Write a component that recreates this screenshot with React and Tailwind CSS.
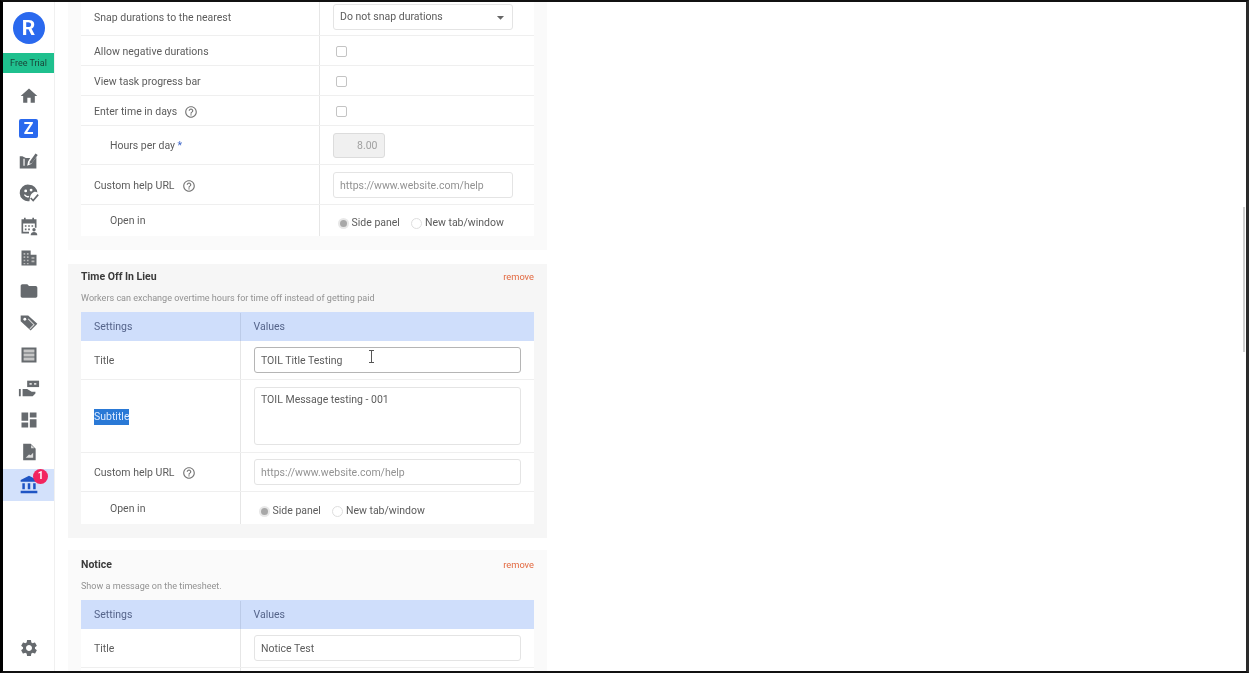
import React from "react";
import { MdHome, MdFolder, MdDashboard, MdAccountBalance, MdSettings, MdHelpOutline, MdArrowDropDown } from "react-icons/md";

const C = "#666a6e";
const Svg = ({ children, size = 20 }) => (
  <svg width={size} height={size} viewBox="0 0 24 24" fill={C}>{children}</svg>
);
const IconBox = ({ children, active }) => (
  <div className={"relative flex h-[32.4px] w-full items-center justify-center " + (active ? "bg-[#d3e1fb]" : "")}>{children}</div>
);

const Edit = () => (<Svg size={21}><path d="M2 7h3l4 2h5l-2.500 4-1 5 4.500-2 6-8v13H2z" /><path d="M6 10h1.800v8H6z" fill="#fff" opacity="0.75" /><path d="M13.500 13l6.500-9 2.500 1.800-6.500 9-3 1.200z" /></Svg>);
const FaceCheck = () => (<Svg><path d="M12 2a10 10 0 0 1 10 9.500c-1-.8-2.500-1.200-4-.7-2 .6-4 3-4.500 5l-1 6A10 10 0 1 1 12 2z" /><circle cx="8" cy="9.500" r="1.700" fill="#fff" /><circle cx="14.500" cy="8.500" r="1.700" fill="#fff" /><path d="M6.500 14c1.500 2.200 4 2.800 5.500 2" stroke="#fff" strokeWidth="1.500" fill="none" /><path d="M14 18l3 3 6-7" stroke={C} strokeWidth="2" fill="none" /></Svg>);
const Cal = () => (<Svg><path d="M3 4h3V2h2v2h8V2h2v2h3v10h-2V9H5v10h7v2H3z" /><path d="M7 11h2v2H7zM11 11h2v2h-2zM15 11h2v2h-2zM7 15h2v2H7zM11 15h2v2h-2z" /><circle cx="18" cy="16.500" r="2" /><path d="M14 23c0-5 8-5 8 0z" /></Svg>);
const Building = () => (<Svg><path d="M3 3h11v5h7v13H3z" /><path d="M5.500 6h2v2h-2zM9.500 6h2v2h-2zM5.500 10h2v2h-2zM9.500 10h2v2h-2zM15 11h3.500v2H15zM5.500 14h2v2h-2zM9.500 14h2v2h-2zM15 15h3.500v2H15zM5.500 18h2v1.500h-2zM9.500 18h2v1.500h-2z" fill="#b9b9b9" /></Svg>);
const Tags = () => (<Svg><path d="M2 3h9l11 10-8 8L2 10z" /><circle cx="7" cy="7.500" r="1.700" fill="#fff" /><path d="M11 7l7 7-5 5" stroke="#d5d5d5" strokeWidth="1.300" fill="none" /></Svg>);
const Rows = () => (<Svg><path d="M3 3h18v18H3z" /><path d="M5.500 5.500h13v3.600h-13zM5.500 10.200h13v3.600h-13zM5.500 14.900h13v3.600h-13z" fill="#c6c6c6" /></Svg>);
const Hand = () => (<Svg size={22}><path d="M10 4h13v7H10z" /><path d="M12.500 6.500h2.500v2h-2.500zM17.500 6.500h2.500v2h-2.500z" fill="#ddd" /><path d="M1 13h2v8H1zM5 13h5l5 3h4v2l-3 3H5z" /></Svg>);
const FileChart = () => (<Svg><path d="M5 2h9l6 6v14H5z" /><path d="M14.500 3.500v4h4z" fill="#ddd" /><path d="M8 19l4-4 2 1 3-3v6z" fill="#ddd" /></Svg>);

const Sidebar = () => (
  <aside className="flex h-full w-[52px] shrink-0 flex-col items-center border-r border-[#f0f0f0] bg-white blur-[0.4px]">
    <div className="mt-[10px] flex h-[32px] w-[32px] items-center justify-center rounded-full bg-[#2a69ee] text-[21px] font-bold leading-none text-white">R</div>
    <div className="mt-[9px] flex h-[20px] w-full items-center justify-center bg-[#1fc08e] pt-[1px] text-[9px] text-[#1a4438]">Free Trial</div>
    <div className="mt-[7px] flex w-full flex-col">
      <IconBox><MdHome size={20} color={C} /></IconBox>
      <IconBox><div className="flex h-[19px] w-[19px] items-center justify-center rounded-[2px] bg-[#2a69ee] text-[16px] font-bold leading-none text-white">Z</div></IconBox>
      <IconBox><Edit /></IconBox>
      <IconBox><FaceCheck /></IconBox>
      <IconBox><Cal /></IconBox>
      <IconBox><Building /></IconBox>
      <IconBox><MdFolder size={20} color={C} /></IconBox>
      <IconBox><Tags /></IconBox>
      <IconBox><Rows /></IconBox>
      <IconBox><Hand /></IconBox>
      <IconBox><MdDashboard size={20} color={C} /></IconBox>
      <IconBox><FileChart /></IconBox>
      <IconBox active>
        <MdAccountBalance size={20} color="#1f55c4" />
        <span className="absolute left-[30px] top-0 flex h-[15px] w-[15px] items-center justify-center rounded-full bg-[#f2255f] text-[10px] font-bold leading-none text-white">1</span>
      </IconBox>
    </div>
    <div className="mt-auto mb-[13px]"><MdSettings size={20} color={C} /></div>
  </aside>
);

const Help = () => <MdHelpOutline size={14} color="#777" className="ml-[7px]" />;

const Row = ({ h, label, indent, w = "w-[239px]", children, last, labelClass = "", labelPad = "pt-[2px]" }) => (
  <div className={"flex " + (last ? "" : "border-b border-[#efefef]")} style={{ height: h }}>
    <div className={"flex shrink-0 items-center border-r border-[#e6e6e6] text-[10.500px] text-[#5c5c5c] " + labelPad + " " + w + " " + (indent ? "pl-[29px]" : "pl-[13px]")}>
      <span className={labelClass}>{label}</span>
    </div>
    <div className="flex min-w-0 flex-1 items-center pl-[12.500px]">{children}</div>
  </div>
);

const Input = ({ w, text, placeholder, focus, h = "h-[26px]" }) => (
  <div className={"flex items-center rounded-[3px] bg-white pl-[6.500px] pt-[2px] text-[10.500px] " + w + " " + h + " " + (focus ? "border border-[#b5b5b5]" : "border border-[#e4e4e4]") + " " + (placeholder ? "text-[#929292]" : "text-[#5c5c5c]")}>
    {text}
  </div>
);

const Check = () => <div className="h-[11px] w-[11px] rounded-[2px] border border-[#c4c4c4] bg-white" />;

const Radios = ({ pad = "pt-[6px]" }) => (
  <div className={"flex items-center text-[10.500px] text-[#5c5c5c] " + pad}>
    <span className="ml-[5px] flex h-[11px] w-[11px] items-center justify-center rounded-full bg-[#e8e8e8]"><span className="h-[7px] w-[7px] rounded-full bg-[#a8a8a8]" /></span>
    <span className="ml-[3px]">Side panel</span>
    <span className="ml-[11px] h-[11px] w-[11px] rounded-full border border-[#dedede] bg-white" />
    <span className="ml-[3px]">New tab/window</span>
  </div>
);

const Head = ({ title, sub }) => (
  <>
    <div className="flex h-[26px] items-center justify-between">
      <span className="text-[10.500px] font-bold text-[#3a3a3a]">{title}</span>
      <span className="text-[9.300px] text-[#e2683f]">remove</span>
    </div>
    <div className="mb-[5px] flex h-[17px] items-center pt-[1px] text-[9.050px] text-[#929292]">{sub}</div>
  </>
);

const THead = () => (
  <div className="flex h-[29px] bg-[#cfdefb] pt-[1px] text-[10.500px] text-[#55648a]">
    <div className="flex w-[160px] shrink-0 items-center border-r border-[#bccbe8] pl-[13px]">Settings</div>
    <div className="flex flex-1 items-center pl-[12.500px]">Values</div>
  </div>
);

const Cursor = () => (
  <svg width="7" height="13" viewBox="0 0 7 13" className="absolute left-[107px] top-[-3px]" fill="none" stroke="#555" strokeWidth="1">
    <path d="M1 .5h5M3.500 .5v12M1 12.500h5" />
  </svg>
);

export default function App() {
  return (
    <div className="h-[678px] w-[1252px] overflow-hidden bg-white" style={{ fontFamily: "Roboto, Inter, 'Liberation Sans', sans-serif" }}>
      <div className="flex h-[673px] w-[1249px] overflow-hidden border-y-2 border-r-[3px] border-l-[3px] border-y-[#111] border-r-[#2a2a2a] border-l-black">
        <Sidebar />
        <main className="relative flex-1 overflow-hidden">
          <div className="ml-[13px] mt-[-4px] w-[479px] blur-[0.4px]">
            <div className="h-[252px] bg-[#fafafa] px-[13px]">
              <div className="bg-white">
                <Row h="38px" label="Snap durations to the nearest">
                  <div className="flex h-[26px] w-[180px] items-center justify-between rounded-[3px] border border-[#e4e4e4] bg-white pl-[6.500px] pr-[3px] pt-[1px] text-[10.500px] text-[#5c5c5c]">
                    Do not snap durations
                    <MdArrowDropDown size={17} color="#666" />
                  </div>
                </Row>
                <Row h="30px" label="Allow negative durations"><span className="ml-[3px] mt-[1px]"><Check /></span></Row>
                <Row h="30px" label="View task progress bar"><span className="ml-[3px] mt-[1px]"><Check /></span></Row>
                <Row h="30px" label={<span className="flex items-center">Enter time in days<Help /></span>}><span className="ml-[3px] mt-[1px]"><Check /></span></Row>
                <Row h="39px" indent label={<>Hours per day <span className="text-[#3a63c8]">*</span></>}>
                  <div className="flex h-[25px] w-[52px] items-center justify-end rounded-[3px] border border-[#dcdcdc] bg-[#f0f0f0] pr-[6px] pt-[1px] text-[10.500px] text-[#a0a0a0]">8.00</div>
                </Row>
                <Row h="40px" label={<span className="flex items-center">Custom help URL<Help /></span>}>
                  <Input w="w-[180px]" text="https://www.website.com/help" placeholder />
                </Row>
                <Row h="31px" indent last label="Open in" labelPad="pt-0"><Radios pad="pt-[5px]" /></Row>
              </div>
            </div>

            <div className="mt-[14px] h-[274px] bg-[#f6f6f6] px-[13px]">
              <Head title="Time Off In Lieu" sub="Workers can exchange overtime hours for time off instead of getting paid" />
              <THead />
              <div className="bg-white">
                <Row h="39px" w="w-[160px]" label="Title">
                  <Input w="w-[267px]" text={<span className="relative w-full">TOIL Title Testing<Cursor /></span>} focus />
                </Row>
                <Row h="73px" w="w-[160px]" label="Subtitle" labelClass="bg-[#2a79d6] text-[#dceaff]">
                  <div className="h-[58px] w-[267px] rounded-[3px] border border-[#e4e4e4] bg-white pl-[6.500px] pt-[5px] text-[10.500px] leading-[14px] text-[#5c5c5c]">TOIL Message testing - 001</div>
                </Row>
                <Row h="39px" w="w-[160px]" label={<span className="flex items-center">Custom help URL<Help /></span>}>
                  <Input w="w-[267px]" text="https://www.website.com/help" placeholder />
                </Row>
                <Row h="32px" w="w-[160px]" indent last label="Open in"><Radios /></Row>
              </div>
            </div>

            <div className="mt-[12px] h-[140px] bg-[#fafafa] px-[13px] pt-[2px]">
              <Head title="Notice" sub="Show a message on the timesheet." />
              <THead />
              <div className="bg-white">
                <Row h="39px" w="w-[160px]" label="Title"><Input w="w-[267px]" text="Notice Test" /></Row>
                <Row h="20px" w="w-[160px]" last label="" />
              </div>
            </div>
          </div>
          <div className="absolute right-[1px] top-[205px] h-[145px] w-[2px] bg-[#cfcfcf]" />
        </main>
      </div>
    </div>
  );
}
